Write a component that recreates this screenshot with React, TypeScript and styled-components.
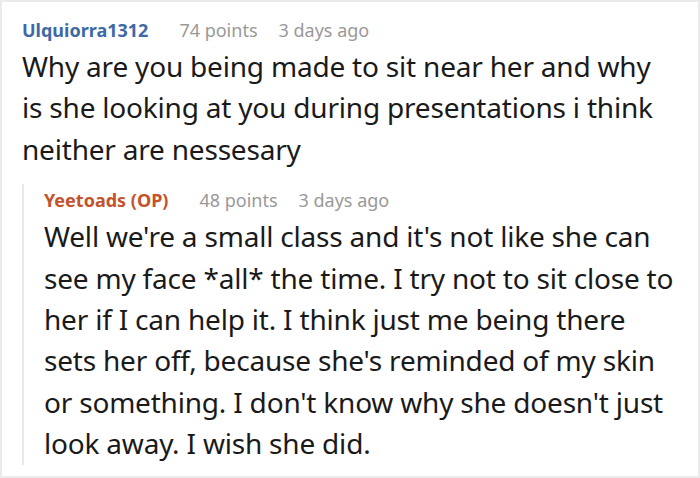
import React from "react";
import styled, { createGlobalStyle } from "styled-components";

const GlobalStyle = createGlobalStyle`
  html, body {
    margin: 0;
    padding: 0;
    background: #ffffff;
  }
  body {
    font-family: "Noto Sans", "Open Sans", sans-serif;
  }
`;

interface CommentData {
  author: string;
  op?: boolean;
  points: number;
  age: string;
  text: string;
}

const parent: CommentData = {
  author: "Ulquiorra1312",
  points: 74,
  age: "3 days ago",
  text: "Why are you being made to sit near her and why is she looking at you during presentations i think neither are nessesary",
};

const reply: CommentData = {
  author: "Yeetoads (OP)",
  op: true,
  points: 48,
  age: "3 days ago",
  text: "Well we're a small class and it's not like she can see my face *all* the time. I try not to sit close to her if I can help it. I think just me being there sets her off, because she's reminded of my skin or something. I don't know why she doesn't just look away. I wish she did.",
};

const Frame = styled.div`
  box-sizing: border-box;
  width: 700px;
  height: 478px;
  border: 2px solid #ebebeb;
  padding: 12px 22px 0 20px;
  overflow: hidden;
`;

const Comment = styled.div`
  display: flex;
  flex-direction: column;
`;

const Header = styled.div`
  display: flex;
  align-items: center;
  height: 32px;
  font-size: 18px;
  white-space: nowrap;
`;

const Author = styled.span<{ $op?: boolean }>`
  font-weight: 700;
  color: ${(p) => (p.$op ? "#c4532b" : "#3d6aa6")};
  margin-right: 31px;
`;

const Meta = styled.span`
  color: #999999;
  margin-right: 21px;
`;

const Body = styled.p`
  margin: 0;
  font-size: 28px;
  line-height: 41.4px;
  letter-spacing: -0.2px;
  color: #1a1a1a;
`;

const Replies = styled.div`
  margin-top: 14px;
  margin-bottom: 8px;
  border-left: 2px solid #e8e8e8;
  padding-left: 20px;
`;

function CommentHeader({ c }: { c: CommentData }) {
  return (
    <Header>
      <Author $op={c.op}>{c.author}</Author>
      <Meta>{c.points} points</Meta>
      <Meta>{c.age}</Meta>
    </Header>
  );
}

export default function App() {
  return (
    <>
      <GlobalStyle />
      <Frame>
        <Comment>
          <CommentHeader c={parent} />
          <Body>{parent.text}</Body>
          <Replies>
            <Comment>
              <CommentHeader c={reply} />
              <Body>{reply.text}</Body>
            </Comment>
          </Replies>
        </Comment>
      </Frame>
    </>
  );
}
